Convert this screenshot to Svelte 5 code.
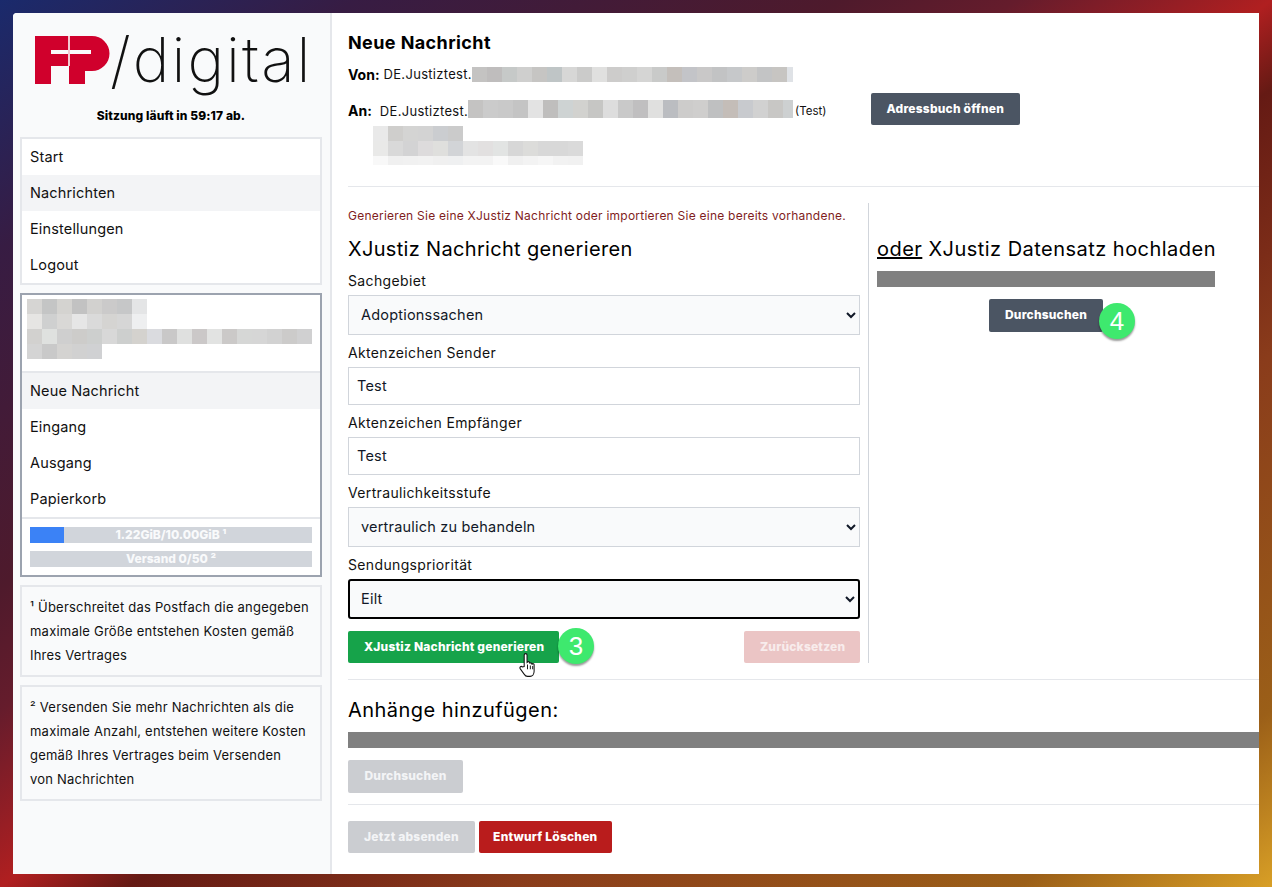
<script>
  const g = ['#d6d5d3','#c4c5c5','#d4d3d0','#c2c2c2','#d2d1cf','#cbcaca','#c6c7c8','#e4e5e6','#e6e5e3','#cfd0d0','#d9d8d6','#e6e6e6','#dadada','#d5d4d2','#d6d6d6','#eeeff0'];
  const sideRows = [
    g.slice(0,8),
    g.slice(8,16),
    ['#d2d1cf','#dfe1df','#cfcfcf','#cdccca','#cdcfce','#d8d8d8','#cdcfce','#d4d2ce','#dadbdf','#c9c8c8','#dfe0df','#cbc8c8','#e2e3e2','#cbc9c8','#d6d7d6','#d6d6d6','#d2d2d2','#cccbca','#d0d0d1'],
    ['#d4d4d4','#c9c9c9','#d4d3d1','#d1d1d1','#d0d1d3']
  ];
  const vonRow = ['#c4c3c2','#bfbdbd','#c6c9c8','#cfcfce','#c6c5c3','#bfc5c6','#d7d7d6','#cbcbca','#e0e0df','#cdcccb','#cfcfce','#d5d5d4','#c9cac9','#c4bfbb','#c3c4c8','#c9c8c8','#c2c3c4','#c6c8ca','#cdccca','#c3c4c5','#c7c5c2','#dfe2e6'];
  const anRow = ['#c4c3c2','#cbcbcb','#c9c9c9','#c4c4c4','#e3e3e3','#bfbebd','#ced3d3','#d2d2cf','#c6c6c4','#dddddd','#c9c9c9','#c0bfc0','#e0e0df','#bbbdc1','#cdcccb','#cfcecd','#bfc0c1','#c4bdb8','#c8cace','#d1d1d1','#c8c7c5','#cdd0d1'];
  const addr = [
    ['#e9e9e9','#cfcecc','#d4d4d3','#d3d3d3','#cbcdd0','#cbcbcb'],
    ['#e9e9e8','#d9d9d9','#d3d3d4','#dddbdc','#dfdfdd','#d2d4d7','#e3e3e3','#e2e0e0','#e2e4e3','#d7d7d7','#dcdcda','#d8d8d8','#d8d8d8','#dadada'],
    ['#f8f8f8','#f0f0f0','#f1f1f1','#f2f2f2','#f0f0f0','#eff0f1','#f3f3f3','#f3f3f3','#f9f9f9','#f0f0f0','#f3f3f3','#f6f6f6','#f2f2f2','#f1f1f1']
  ];
  const nav1 = ['Start', 'Nachrichten', 'Einstellungen', 'Logout'];
  const nav2 = ['Neue Nachricht', 'Eingang', 'Ausgang', 'Papierkorb'];
</script>

<div class="window">
  <aside class="sidebar">
    <div class="logo">
      <svg class="mark" width="75" height="48" viewBox="0 0 75 48" aria-label="FP">
        <path d="M0 0H57A17.5 17.5 0 0 1 57 35H50V48H34V30H16V48H0Z" fill="#d0002c"/>
        <rect x="16" y="14" width="40" height="4" fill="#f9fafb"/>
        <rect x="33" y="0" width="2" height="30" fill="#f3c9d2"/>
      </svg>
      <span class="logotext">/digital</span>
    </div>
    <div class="session">Sitzung läuft in 59:17 ab.</div>

    <nav class="box">
      {#each nav1 as item, i}
        <div class="item" class:active={i === 1}>{item}</div>
      {/each}
    </nav>

    <div class="box strong">
      <div class="acct">
        {#each sideRows as row}
          <div class="blurrow">
            {#each row as c}<i style="background:{c}"></i>{/each}
          </div>
        {/each}
      </div>
      <div class="sub">
        {#each nav2 as item, i}
          <div class="item" class:active={i === 0}>{item}</div>
        {/each}
      </div>
      <div class="meters">
        <div class="meter"><div class="fill"></div><span>1.22GiB/10.00GiB ¹</span></div>
        <div class="meter"><span>Versand 0/50 ²</span></div>
      </div>
    </div>

    <div class="box note">¹ Überschreitet das Postfach die angegeben maximale Größe entstehen Kosten gemäß Ihres Vertrages</div>
    <div class="box note">² Versenden Sie mehr Nachrichten als die maximale Anzahl, entstehen weitere Kosten gemäß Ihres Vertrages beim Versenden<br />von Nachrichten</div>
  </aside>

  <main class="main">
    <header class="head">
      <h1>Neue Nachricht</h1>
      <div class="von">
        <b>Von:</b><span class="addr">DE.Justiztest.</span>
        <div class="blurrow vonblur">{#each vonRow as c}<i style="background:{c}"></i>{/each}</div>
      </div>
      <div class="an">
        <b>An:</b><span class="addr">DE.Justiztest.</span>
        <div class="blurrow anblur">{#each anRow as c}<i style="background:{c}"></i>{/each}</div>
        <small>(Test)</small>
        <button class="btn slate addrbook">Adressbuch öffnen</button>
      </div>
      <div class="addrblock">
        {#each addr as row, i}
          <div class="blurrow" class:short={i === 2}>{#each row as c}<i style="background:{c}"></i>{/each}</div>
        {/each}
      </div>
    </header>

    <section class="columns">
      <form class="left">
        <p class="hint">Generieren Sie eine XJustiz Nachricht oder importieren Sie eine bereits vorhandene.</p>
        <h2>XJustiz Nachricht generieren</h2>
        <label for="f1">Sachgebiet</label>
        <select id="f1"><option>Adoptionssachen</option></select>
        <label for="f2">Aktenzeichen Sender</label>
        <input id="f2" value="Test" />
        <label for="f3">Aktenzeichen Empfänger</label>
        <input id="f3" value="Test" />
        <label for="f4">Vertraulichkeitsstufe</label>
        <select id="f4"><option>vertraulich zu behandeln</option></select>
        <label for="f5">Sendungspriorität</label>
        <select id="f5" class="focus"><option>Eilt</option></select>
        <div class="actions">
          <div class="gen">
            <button type="button" class="btn green">XJustiz Nachricht generieren</button>
            <span class="badge b3">3</span>
            <svg class="hand" width="17" height="27" viewBox="0 0 18 26" preserveAspectRatio="none">
              <path d="M5.5 14V3a1.5 1.5 0 0 1 3 0v7l.6-.4a1.4 1.4 0 0 1 2.2.8l.2.3a1.3 1.3 0 0 1 2.1.9l.2.2a1.2 1.2 0 0 1 2.2.8v5.9c0 2.6-1.7 5-4.3 5H9c-1.8 0-2.7-.9-3.6-2.2L1.2 16c-.8-1.3.9-2.8 2.2-1.7Z" fill="#fff" stroke="#111" stroke-width="1.1"/>
              <path d="M9 12v4.5M12 13v3.5M14.5 13.5v3" stroke="#111" stroke-width="1" fill="none"/>
            </svg>
          </div>
          <button type="button" class="btn pale">Zurücksetzen</button>
        </div>
      </form>
      <div class="right">
        <h2><u>oder</u> XJustiz Datensatz hochladen</h2>
        <div class="filebar"></div>
        <div class="browse">
          <div class="gen">
            <button type="button" class="btn slate tall">Durchsuchen</button>
            <span class="badge b4">4</span>
          </div>
        </div>
      </div>
    </section>

    <section class="attach">
      <h2 class="att">Anhänge hinzufügen:</h2>
      <div class="filebar wide"></div>
      <button type="button" class="btn grey tall attbtn">Durchsuchen</button>
    </section>

    <footer class="foot">
      <button type="button" class="btn grey">Jetzt absenden</button>
      <button type="button" class="btn red">Entwurf Löschen</button>
    </footer>
  </main>
</div>

<style>
  :global(html), :global(body) { height: 887px; overflow: hidden; }
  :global(body) {
    margin: 0;
    background: linear-gradient(to bottom right, #1a2a6c 0%, #371c43 14%, #4e1a2c 33%, #651c2c 40%, #b01f20 50%, #651a14 55%, #7b2c18 64%, #8a3c1b 70%, #9b5f18 90%, #d89f26 100%);
    font-family: Inter, "Open Sans", sans-serif;
    color: #111827;
  }
  .window {
    box-sizing: border-box;
    margin: 13px 0 0 13px;
    width: 1246px;
    height: 861px;
    display: flex;
    background: #fff;
    border-top-left-radius: 4px;
    overflow: hidden;
  }
  .sidebar {
    box-sizing: border-box;
    width: 319px;
    flex: none;
    background: #f9fafb;
    border-right: 2px solid #e5e7eb;
    padding: 0 8px 0 7px;
  }
  .logo { display: flex; height: 93px; padding: 23px 0 0 15px; box-sizing: border-box; }
  .mark { flex: none; }
  .logotext {
    font-size: 62px; font-weight: 250; line-height: 48px; color: #111;
    letter-spacing: 2px; white-space: nowrap;
  }
  .session { height: 31px; text-align: center; font-size: 12px; font-weight: 800; line-height: 20px; color: #000; letter-spacing: 0.1px; }
  .box { border: 2px solid #e5e7eb; margin-bottom: 8px; }
  nav.box { background: #fff; }
  .box.strong { background: #fff; border-color: #9ca3af; }
  .item { height: 36px; line-height: 36px; padding-left: 8px; font-size: 14.5px; letter-spacing: 0.15px; color: #111; }
  .item.active { background: #f3f4f6; }
  .acct { height: 76px; padding: 4px 0 0 5px; box-sizing: border-box; }
  .blurrow { display: flex; height: 15px; overflow: hidden; }
  .blurrow i { display: block; width: 15px; flex: none; }
  .blurrow.short { height: 9px; }
  .vonblur { width: 321px; }
  .anblur { width: 325px; height: 18px; }
  .sub { border-top: 2px solid #e5e7eb; border-bottom: 2px solid #e5e7eb; }
  .meters { padding: 8px; display: flex; flex-direction: column; gap: 8px; }
  .meter { position: relative; height: 16px; background: #d1d5db; text-align: center; }
  .meter .fill { position: absolute; left: 0; top: 0; bottom: 0; width: 12%; background: #3b82f6; }
  .meter span { position: relative; font-size: 12px; font-weight: 800; color: #f9fafb; line-height: 16px; display: block; }
  .note { padding: 8px; font-size: 13px; line-height: 24px; letter-spacing: 0.22px; color: #111; }

  .main { flex: 1; min-width: 0; padding: 0; }
  .head { height: 174px; box-sizing: border-box; margin-left: 16px; border-bottom: 1px solid #e5e7eb; padding-top: 19px; }
  h1 { margin: 0; font-size: 18px; line-height: 21px; font-weight: 700; letter-spacing: 0.4px; color: #000; }
  .von { display: flex; align-items: center; margin-top: 11px; height: 20px; font-size: 13px; color: #111; }
  .von b, .an b { font-weight: 700; margin-right: 4px; font-size: 14px; color: #000; }
  .addr { letter-spacing: 0.3px; }
  .an { display: flex; align-items: center; margin-top: 9px; height: 32px; font-size: 13px; color: #111; }
  .an b { margin-right: 8px; margin-top: 3px; }
  .an .addr, .an small { margin-top: 3px; }
  .an small { font-size: 11.5px; margin-left: 2px; }
  .addrbook { margin-left: 44px; }
  .addrblock { margin: 1px 0 0 25px; }

  .columns { display: flex; margin-left: 16px; height: 493px; padding-top: 16px; box-sizing: border-box; border-bottom: 1px solid #e5e7eb; }
  .left { width: 512px; flex: none; display: flex; flex-direction: column; height: 460px; padding-right: 8px; border-right: 1px solid #d1d5db; box-sizing: content-box; }
  .hint { margin: 5px 0 0; font-size: 12px; line-height: 16px; letter-spacing: 0.24px; color: #7f1d1d; white-space: nowrap; }
  h2 { margin: 0; font-weight: 400; font-size: 20px; color: #000; line-height: 28px; white-space: nowrap; }
  .left h2 { margin-top: 11px; letter-spacing: 0.32px; }
  label { display: block; font-size: 14px; line-height: 20px; margin-top: 8px; height: 24px; letter-spacing: 0.35px; color: #111; }
  .left h2 + label { margin-top: 8px; height: 24px; }
  select, input {
    box-sizing: border-box; width: 512px; font: inherit; font-size: 14.5px; letter-spacing: 0.2px; color: #111827;
    border: 1px solid #d1d5db; margin: 0; outline: none;
  }
  select { height: 40px; background: #f9fafb; padding: 0 8px 2px; border-radius: 0; }
  input { height: 38px; background: #fff; padding: 0 8px 2px; }
  select.focus { border: 2px solid #000; border-radius: 3px; padding: 0 7px 2px; }
  .actions { display: flex; justify-content: space-between; margin-top: 12px; }
  .gen { position: relative; display: inline-flex; }
  .btn {
    box-sizing: border-box; height: 32px; border: 0; border-radius: 2px; padding: 0 16px 2px;
    font: inherit; font-size: 12px; font-weight: 800; letter-spacing: 0.2px; color: #fff; white-space: nowrap;
  }
  .btn.tall { height: 33px; }
  .slate { background: #4b5563; }
  .green { background: #16a34a; width: 211px; }
  .pale { background: #ebc5c5; width: 116px; color: #f8ecec; }
  .grey { background: #cbcdd1; color: #f3f4f6; }
  .red { background: #b91c1c; width: 133px; padding: 0 0 2px; }
  .badge {
    position: absolute; width: 36px; height: 36px; border-radius: 50%;
    background: #3ee96e; color: #fff; box-shadow: 0 2px 2px rgba(0, 0, 0, 0.4);
    font: 400 26px/36px "Liberation Sans", Arial, sans-serif; text-align: center;
  }
  .b3 { left: 210px; top: -3px; }
  .b4 { left: 110px; top: 4px; }
  .hand { position: absolute; left: 171px; top: 21px; }
  .right { margin-left: 8px; width: 338px; }
  .right h2 { margin-top: 32px; letter-spacing: 0.47px; }
  .filebar { height: 16px; background: #808080; margin-top: 8px; }
  .filebar.wide { margin-top: 8px; }
  .browse { display: flex; justify-content: center; margin-top: 12px; }
  .attach { margin-left: 16px; height: 125px; box-sizing: border-box; border-bottom: 1px solid #e5e7eb; padding-top: 16px; }
  .att { letter-spacing: 0.45px; }
  .attach .btn { margin-top: 12px; }
  .attbtn { width: 115px; padding: 0 0 2px; }
  .foot { margin-left: 16px; padding-top: 16px; display: flex; gap: 4px; }
</style>
